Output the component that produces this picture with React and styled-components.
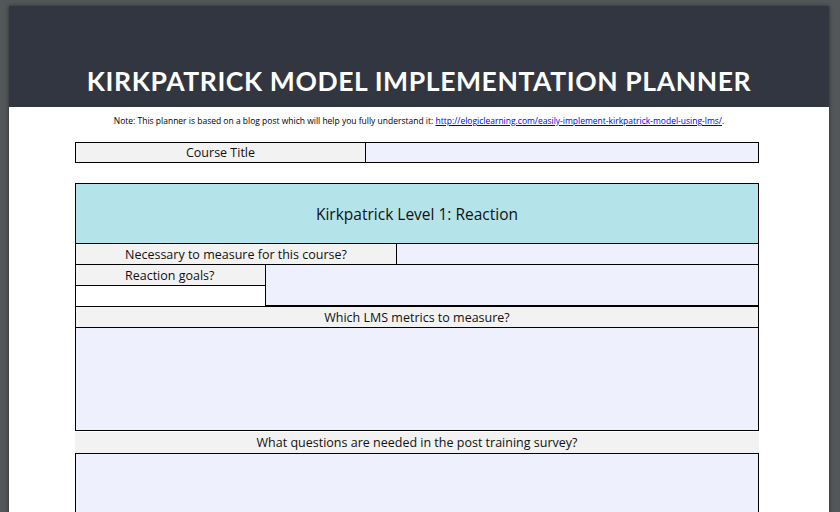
import React from "react";
import styled, { createGlobalStyle } from "styled-components";

const G = createGlobalStyle`
  html,body{margin:0;padding:0;background:#53575a;overflow:hidden;}
  body{font-family:"Open Sans","Noto Sans",sans-serif;}
`;
const Page = styled.div`
  margin:6px 0 0 9px;width:820px;height:520px;background:#fff;box-shadow:0 0 4px rgba(0,0,0,.5);
`;
const Header = styled.div`
  height:101px;background:#323640;display:flex;align-items:flex-end;justify-content:center;box-sizing:border-box;
`;
const Title = styled.h1`
  margin:0 0 10px;color:#fff;font-family:"Lato","Open Sans",sans-serif;font-weight:700;font-size:26.5px;letter-spacing:0.6px;
`;
const Note = styled.div`
  text-align:center;font-size:8.5px;margin-top:8px;color:#000;
  a{color:#0000ee;}
`;
const Sheet = styled.div`
  width:684px;margin:16px 0 0 66px;display:flex;flex-direction:column;color:#111;font-size:12.5px;
`;
const Row = styled.div`display:flex;flex-shrink:0;`;
const Cell = styled.div`
  box-sizing:border-box;border:1px solid #000;margin:${p=>p.$m||"0"};flex-shrink:0;
  width:${p=>p.$w||"auto"};${p=>p.$w?"":"flex-grow:1;"}height:${p=>p.$h}px;
  background:${p=>p.$bg||"#fff"};display:flex;align-items:center;
  justify-content:${p=>p.$left?"flex-start":"center"};padding-left:${p=>p.$pl||0}px;
`;
const Level = styled(Cell)`font-size:15.5px;`;
const Col = styled.div`display:flex;flex-direction:column;width:${p=>p.$w};flex-shrink:0;`;
const GR="#f2f2f2", BL="#eef0fd";

export default function App(){
  return <><G/><Page>
    <Header><Title>KIRKPATRICK MODEL IMPLEMENTATION PLANNER</Title></Header>
    <Note>Note: This planner is based on a blog post which will help you fully understand it: <a href="#">http://elogiclearning.com/easily-implement-kirkpatrick-model-using-lms/</a>.</Note>
    <Sheet>
      <Row><Cell $w="291px" $h={21} $bg={GR}>Course Title</Cell><Cell $h={21} $bg={BL} $m="0 0 0 -1px"/></Row>
      <Level $h={61} $bg="#b4e4ea" $m="20px 0 0">Kirkpatrick Level 1: Reaction</Level>
      <Row><Cell $w="322px" $h={22} $bg={GR} $left $pl={49} $m="-1px 0 0">Necessary to measure for this course?</Cell><Cell $h={22} $bg={BL} $m="-1px 0 0 -1px"/></Row>
      <Row>
        <Col $w="191px">
          <Cell $h={22} $bg={GR} $left $pl={49} $m="-1px 0 0">Reaction goals?</Cell>
          <Cell $h={20} $m="0" style={{borderBottom:"none",borderTop:"none"}}/>
        </Col>
        <Cell $h={42} $bg={BL} $m="-1px 0 0 -1px"/>
      </Row>
      <Cell $h={22} $bg={GR}>Which LMS metrics to measure?</Cell>
      <Cell $h={104} $bg={BL} $m="-1px 0 0"/>
      <Cell $h={21} $bg={GR} $m="1px 0 0" style={{border:"none"}}>What questions are needed in the post training survey?</Cell>
      <Cell $h={80} $bg={BL}/>
    </Sheet>
  </Page></>;
}
